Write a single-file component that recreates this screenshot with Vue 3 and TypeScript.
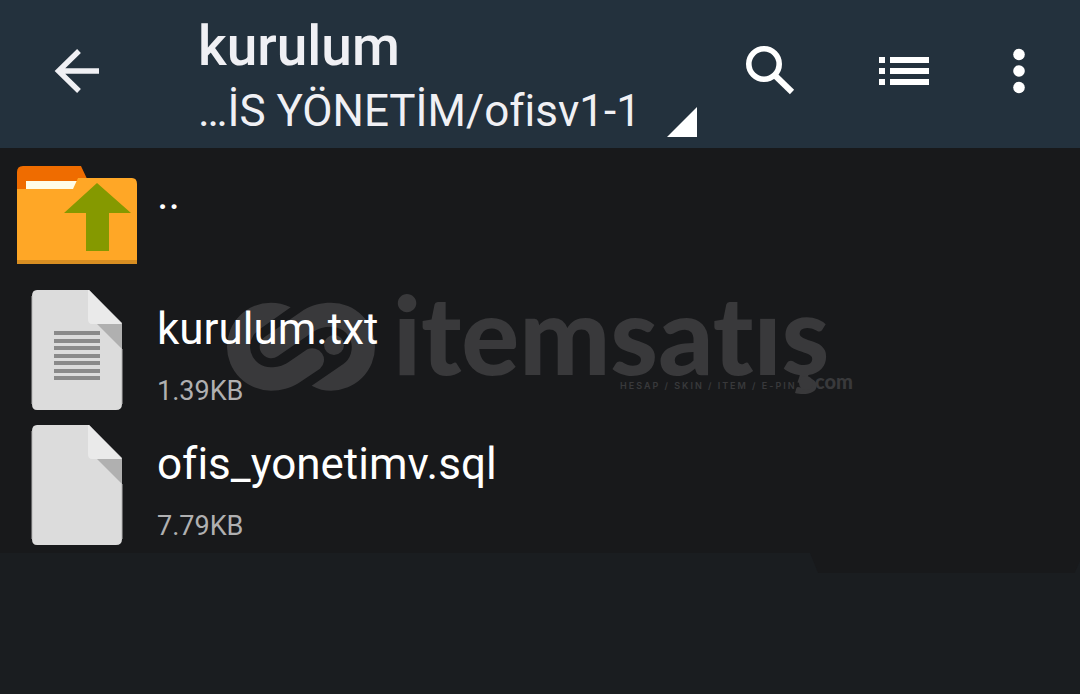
<script setup lang="ts">
interface Entry {
  name: string
  size?: string
  kind: 'up' | 'text' | 'file'
}

const title = 'kurulum'
const path = '…İS YÖNETİM/ofisv1-1'
const entries: Entry[] = [
  { name: '..', kind: 'up' },
  { name: 'kurulum.txt', size: '1.39KB', kind: 'text' },
  { name: 'ofis_yonetimv.sql', size: '7.79KB', kind: 'file' },
]
const textLines = [41, 49, 56, 64, 71, 79, 86]
</script>

<template>
  <div class="screen">
    <header class="bar">
      <button class="icon-button back" type="button" aria-label="Back">
        <svg width="48" height="48" viewBox="0 0 48 48" fill="none" stroke="#f0f0f4" stroke-width="5.4">
          <path d="M46 24H6M26 4 5.5 24 26 44" />
        </svg>
      </button>
      <button class="location" type="button">
        <span class="title">{{ title }}</span>
        <span class="path">{{ path }}</span>
        <svg class="corner" width="30" height="30" viewBox="0 0 30 30"><path d="M0 30 30 0V30Z" fill="#fff" /></svg>
      </button>
      <nav class="actions">
        <button class="icon-button" type="button" aria-label="Search">
          <svg width="52" height="52" viewBox="0 0 52 52" fill="none" stroke="#fff">
            <circle cx="21" cy="19" r="15.2" stroke-width="5.6" />
            <path d="M32 30.500 49 47" stroke-width="6" />
          </svg>
        </button>
        <button class="icon-button" type="button" aria-label="List view">
          <svg width="50" height="52" viewBox="0 0 50 52" fill="#fff">
            <path d="M0 12h6v6H0zM11 12h39v6H11zM0 23h6v6H0zM11 23h39v6H11zM0 34h6v6H0zM11 34h39v6H11z" />
          </svg>
        </button>
        <button class="icon-button more" type="button" aria-label="More options">
          <svg width="12" height="52" viewBox="0 0 12 52" fill="#fff">
            <circle cx="6" cy="9.500" r="5.800" /><circle cx="6" cy="26" r="5.800" /><circle cx="6" cy="42.500" r="5.800" />
          </svg>
        </button>
      </nav>
    </header>

    <main class="files">
      <svg class="watermark" width="632" height="100" viewBox="0 0 632 100" fill="#39393b" aria-hidden="true">
        <g transform="translate(-15 -7) scale(.33333)">
          <path d="M242 52C222 42 202 38 183 38A132 132 0 0 0 183 302C215 302 240 295 265 280L330 236A35 35 0 0 0 292 178L235 217C215 230 200 232 183 232A62 62 0 0 1 150 117Z" />
          <path d="M305 287C325 298 343 302 363 302A132 132 0 0 0 363 38C333 38 306 45 281 60L165 140A35 35 0 0 0 203 199L310 125C325 115 342 110 363 110A62 62 0 0 1 400 222Z" />
          <circle cx="372" cy="165" r="30" />
        </g>
        <text class="mark-name" x="168" y="78">itemsatış</text>
        <text class="mark-tag" x="395" y="92">HESAP / SKIN / ITEM / E-PIN</text>
        <circle cx="581" cy="86" r="7" />
        <text class="mark-com" x="590" y="92">com</text>
      </svg>
      <ul class="list">
        <li v-for="entry in entries" :key="entry.name">
          <a class="row" href="#" @click.prevent>
            <span class="thumb">
              <svg v-if="entry.kind === 'up'" width="120" height="100" viewBox="0 0 120 100">
                <path d="M0 30V7Q0 1 6 1H64L71 16V30Z" fill="#ef6c00" />
                <path d="M9 16H62V26H9Z" fill="#fffde7" />
                <path d="M0 24H56L61 13H115Q120 13 120 19V99H0Z" fill="#ffa726" />
                <path d="M0 95H120V99H0Z" fill="#d88e22" />
                <path d="M80 18 114 48H92V86H69V48H47Z" fill="#859900" />
              </svg>
              <svg v-else width="92" height="120" viewBox="0 0 92 120">
                <path d="M6 0H58L91 33V114Q91 120 85 120H6Q1 120 1 114V6Q1 0 6 0Z" fill="#dcdcdc" />
                <path d="M1 6V114M91 59V114" stroke="#b5b5b5" stroke-width="1" />
                <path d="M65 33H91V59Z" fill="#b0b0b0" />
                <path d="M57 0H58L91 34H61Q57 34 57 29Z" fill="#eaeaea" />
                <g v-if="entry.kind === 'text'" fill="#8a8a8a">
                  <rect v-for="y in textLines" :key="y" x="23" :y="y" width="46" height="4" />
                </g>
              </svg>
            </span>
            <span class="info">
              <span class="name">{{ entry.name }}</span>
              <span v-if="entry.size" class="size">{{ entry.size }}</span>
            </span>
          </a>
        </li>
      </ul>
    </main>
    <div class="tray"></div>
  </div>
</template>

<style>
html,
body {
  background: #1a1d20;
}
</style>

<style scoped>
.screen {
  min-height: 100vh;
  background: #1a1d20;
  color: #fff;
  font-family: Roboto, "Noto Sans", sans-serif;
  font-variant-ligatures: none;
}

.bar {
  display: flex;
  align-items: center;
  height: 148px;
  padding: 0 55px 0 53px;
  box-sizing: border-box;
  background: #23313d;
}

button {
  margin: 0;
  padding: 0;
  border: 0;
  background: none;
  color: inherit;
  font: inherit;
  font-variant-ligatures: inherit;
  text-align: left;
  cursor: pointer;
}

.icon-button {
  display: block;
  padding-bottom: 6px;
}

.icon-button svg {
  display: block;
}

.location {
  position: relative;
  display: flex;
  flex-direction: column;
  margin-left: 97px;
  padding: 8px 56px 0 0;
  color: #f0f0f4;
  white-space: nowrap;
}

.title {
  font-size: 55px;
  font-weight: 500;
  line-height: 66px;
}

.path {
  font-size: 44px;
  line-height: 64px;
}

.corner {
  position: absolute;
  right: 0;
  bottom: 6px;
}

.actions {
  display: flex;
  align-items: center;
  gap: 84px;
  margin-left: auto;
}

.files {
  position: relative;
  background: #18191b;
}

.watermark {
  position: absolute;
  left: 225px;
  top: 149px;
  overflow: visible;
}

.mark-name {
  font-family: Lato, sans-serif;
  font-size: 108px;
  font-weight: 900;
}

.mark-tag {
  font-family: Inter, sans-serif;
  font-size: 9px;
  font-weight: 600;
  letter-spacing: 2px;
}

.mark-com {
  font-family: Lato, sans-serif;
  font-size: 20px;
  font-weight: 900;
}

.list {
  position: relative;
  margin: 0;
  padding: 0;
  list-style: none;
}

.row {
  display: flex;
  align-items: flex-start;
  height: 135px;
  padding-left: 17px;
  color: inherit;
  text-decoration: none;
}

.thumb {
  display: flex;
  align-items: center;
  justify-content: center;
  width: 120px;
  height: 134px;
}

.info {
  display: flex;
  flex-direction: column;
  padding: 16px 0 0 20px;
}

.name {
  font-size: 44px;
  line-height: 60px;
}

.size {
  margin-top: 12px;
  color: #b0b0b1;
  font-size: 27px;
  line-height: 40px;
}

.tray {
  width: 25%;
  height: 20px;
  margin-left: auto;
  background: #18191b;
  clip-path: polygon(0 0, 100% 0, 100% 8px, 98% 100%, 3% 100%);
}
</style>
